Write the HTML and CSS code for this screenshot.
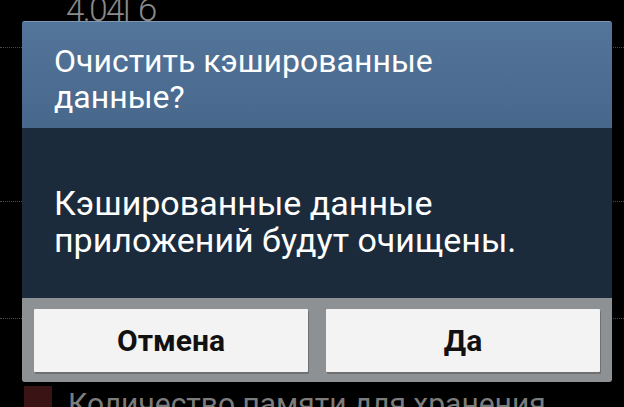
FILE: index.html
```html
<!DOCTYPE html>
<html lang="ru">
<head>
<meta charset="utf-8">
<link rel="stylesheet" href="styles.css">
</head>
<body>
<div class="screen">
  <div class="list">
    <div class="row row-top"><span class="size">4.04Гб</span></div>
    <div class="row row-mid"></div>
    <div class="row row-mid2"></div>
    <div class="row row-bottom">
      <span class="swatch"></span>
      <span class="label">Количество памяти для хранения</span>
    </div>
  </div>
  <div class="dialog">
    <div class="dlg-title">Очистить кэшированные<br>данные?</div>
    <div class="dlg-body">Кэшированные данные<br>приложений будут очищены.</div>
    <div class="dlg-buttons">
      <button class="btn">Отмена</button>
      <button class="btn">Да</button>
    </div>
  </div>
</div>
</body>
</html>
```
FILE: styles.css
```css
html, body {
  margin: 0;
  padding: 0;
  background: #000;
}
.screen {
  position: relative;
  width: 624px;
  height: 407px;
  overflow: hidden;
  background: #000;
  font-family: Roboto, "Noto Sans", sans-serif;
}
.list {
  display: flex;
  flex-direction: column;
}
.row {
  box-sizing: border-box;
  border-bottom: 1px dotted #4a4a4a;
}
.row-top {
  height: 48px;
  padding-left: 66px;
}
.size {
  display: block;
  margin-top: -7px;
  font-size: 33px;
  line-height: 33px;
  letter-spacing: -1.5px;
  color: #8a8a8a;
  font-weight: 300;
}
.row-mid {
  height: 154px;
}
.row-mid2 {
  height: 117px;
}
.row-bottom {
  border-bottom: none;
  height: 90px;
  display: flex;
  align-items: flex-start;
  padding-top: 67px;
  padding-left: 24px;
}
.swatch {
  width: 28px;
  height: 30px;
  background: #3a1414;
  flex: none;
}
.label {
  margin-left: 16px;
  margin-top: 1px;
  font-size: 30px;
  line-height: 34px;
  color: #7c7c7c;
  white-space: nowrap;
}
.dialog {
  position: absolute;
  left: 22px;
  top: 21px;
  width: 590px;
  border-radius: 3px;
  overflow: hidden;
  box-shadow: inset 0 0 0 1px rgba(170, 190, 210, 0.35);
}
.dlg-title {
  box-sizing: border-box;
  height: 107px;
  padding: 21px 0 0 32px;
  background: linear-gradient(#54759a, #47678b);
  color: #fff;
  font-size: 32px;
  line-height: 36px;
  border-top: 1px solid #7d98b4;
}
.dlg-body {
  box-sizing: border-box;
  height: 170px;
  padding: 57px 0 0 32px;
  background: #1c2b3b;
  color: #fff;
  font-size: 34px;
  line-height: 37px;
}
.dlg-buttons {
  box-sizing: border-box;
  height: 84px;
  padding: 11px 12px 10px;
  background: #8e9193;
  display: flex;
  gap: 18px;
}
.btn {
  flex: 1;
  height: 63px;
  border: none;
  border-radius: 1px;
  background: #f3f3f3;
  box-shadow: 1px 2px 0 #6e7072;
  font-family: Roboto, "Noto Sans", sans-serif;
  font-weight: 700;
  font-size: 30px;
  color: #111;
  padding: 0;
}
```
